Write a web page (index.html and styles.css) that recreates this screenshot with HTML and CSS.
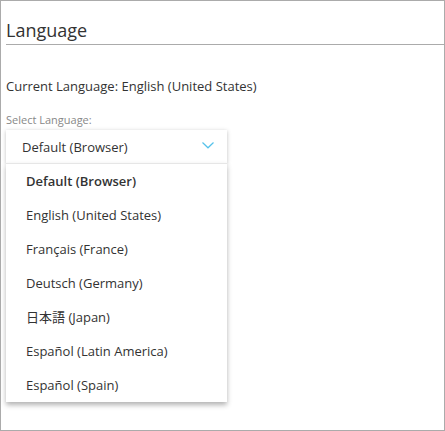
FILE: index.html
```html
<!DOCTYPE html>
<html>
<head>
<meta charset="utf-8">
<link rel="stylesheet" href="styles.css">
</head>
<body>
<div class="panel">
  <h1 class="title">Language</h1>
  <p class="current">Current Language: English (United States)</p>
  <div class="label">Select Language:</div>
  <div class="select">
    <div class="select-head">
      <span>Default (Browser)</span>
      <svg class="chev" width="12" height="7" viewBox="0 0 12 7"><path d="M0.5 0.5 L6 5.8 L11.5 0.5" fill="none" stroke="#56c2ea" stroke-width="1.2"/></svg>
    </div>
    <ul class="menu">
      <li class="item selected">Default (Browser)</li>
      <li class="item">English (United States)</li>
      <li class="item">Français (France)</li>
      <li class="item">Deutsch (Germany)</li>
      <li class="item">日本語 (Japan)</li>
      <li class="item">Español (Latin America)</li>
      <li class="item">Español (Spain)</li>
    </ul>
  </div>
</div>
</body>
</html>
```

FILE: styles.css
```css
html, body {
  margin: 0;
  padding: 0;
  background: #fff;
}
body {
  font-family: "Open Sans", "Noto Sans CJK JP", sans-serif;
  color: #333;
}
.panel {
  box-sizing: border-box;
  width: 445px;
  height: 431px;
  border: 1px solid #ababab;
  padding: 16px 0 0 5px;
}
.title {
  margin: 0;
  font-size: 18px;
  font-weight: 400;
  line-height: 27px;
  color: #333;
  border-bottom: 1px solid #ababab;
}
.current {
  margin: 32px 0 0;
  font-size: 13px;
  line-height: 18px;
}
.label {
  margin-top: 17px;
  font-size: 11px;
  line-height: 15px;
  color: #888;
}
.select {
  position: relative;
  width: 221px;
  margin-top: 3px;
}
.select-head {
  height: 33px;
  box-sizing: border-box;
  display: flex;
  align-items: center;
  justify-content: space-between;
  padding: 0 13px 0 16px;
  font-size: 13px;
  background: #fff;
  box-shadow: 0 1px 4px rgba(0,0,0,0.25);
}
.chev {
  display: block;
  margin-top: -2px;
}
.menu {
  position: absolute;
  left: 0;
  right: 0;
  top: 33px;
  margin: 0;
  padding: 0;
  list-style: none;
  background: #fff;
  border-top: 1px solid #e6e6e6;
  box-shadow: 0 3px 5px rgba(0,0,0,0.3);
}
.item {
  height: 34px;
  line-height: 34px;
  padding-left: 20px;
  font-size: 13px;
  color: #333;
}
.item.selected {
  font-weight: 600;
}
```
